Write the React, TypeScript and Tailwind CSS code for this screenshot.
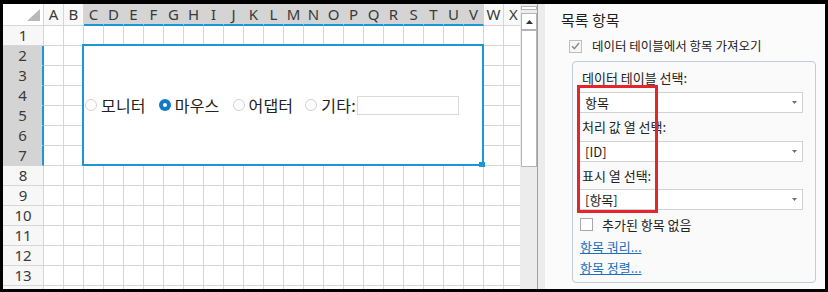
import React from "react";

const COLS = ["A","B","C","D","E","F","G","H","I","J","K","L","M","N","O","P","Q","R","S","T","U","V","W","X"];
const ROWS = [1,2,3,4,5,6,7,8,9,10,11,12,13,14];

function Radio({ checked }: { checked?: boolean }) {
  return checked ? (
    <div className="w-[12px] h-[12px] rounded-full bg-[#1279c8] flex items-center justify-center shrink-0">
      <div className="w-[4px] h-[4px] rounded-full bg-white" />
    </div>
  ) : (
    <div className="w-[12px] h-[12px] rounded-full border border-[#d0d0d0] bg-white shrink-0" />
  );
}

function Combo({ text }: { text: string }) {
  return (
    <div className="w-[224px] h-[21px] border border-[#d2d2d2] bg-white flex items-center justify-between pl-[5px] pr-[5px]">
      <span className="text-[13px] text-[#1e1e1e] leading-none">{text}</span>
      <svg width="5" height="3" viewBox="0 0 5 3"><polygon points="0,0 5,0 2.5,3" fill="#707070" /></svg>
    </div>
  );
}

export default function App() {
  return (
    <div className="w-[828px] h-[292px] bg-black pt-[4px] pl-[3px] pr-[3px] pb-[3px] flex overflow-hidden font-['Noto_Sans_CJK_KR',sans-serif]">
      {/* sheet */}
      <div className="relative w-[517px] h-[285px] overflow-hidden bg-white shrink-0">
        <div className="flex flex-col w-[521px]">
          <div className="flex">
            <div className="relative w-[41px] h-[22px] shrink-0 bg-white border-r border-b border-[#d6d6d6]">
              <svg className="absolute right-[3px] bottom-[4px]" width="13" height="12" viewBox="0 0 13 12">
                <polygon points="13,0 13,12 0,12" fill="#b9b9b9" />
              </svg>
            </div>
            {COLS.map((c, i) => (
              <div
                key={c}
                className={
                  i >= 2 && i <= 21
                    ? "w-[20px] h-[22px] shrink-0 flex items-center justify-center bg-[#d4d4d4] border-r border-r-[#d4d4d4] border-b-2 border-b-[#1c97d4] font-['Noto_Sans',sans-serif] text-[15px] text-[#3a3a3a] leading-none"
                    : "w-[20px] h-[22px] shrink-0 flex items-center justify-center bg-[#f9f9f9] border-r border-b border-[#d6d6d6] font-['Noto_Sans',sans-serif] text-[15px] text-[#3a3a3a] leading-none"
                }
              >
                {c}
              </div>
            ))}
          </div>
          {ROWS.map((r) => (
            <div key={r} className="flex">
              <div
                className={
                  r >= 2 && r <= 7
                    ? "w-[41px] h-[20px] shrink-0 flex items-center justify-center bg-[#d4d4d4] border-r-2 border-r-[#1c97d4] border-b border-b-[#d4d4d4] font-['Noto_Sans',sans-serif] text-[15px] text-[#3a3a3a] leading-none"
                    : "w-[41px] h-[20px] shrink-0 flex items-center justify-center bg-[#f7f7f7] border-r border-b border-[#d6d6d6] font-['Noto_Sans',sans-serif] text-[15px] text-[#3a3a3a] leading-none"
                }
              >
                {r < 14 ? r : ""}
              </div>
              {COLS.map((c) => (
                <div key={c} className="w-[20px] h-[20px] shrink-0 border-r border-b border-[#d6d6d6]" />
              ))}
            </div>
          ))}
        </div>
        {/* form control over the sheet */}
        <div className="absolute left-[79px] top-[40px] w-[402px] h-[122px] border-2 border-[#1c97d4] bg-white flex items-center pl-[1px]">
          <div className="flex items-center">
            <Radio />
            <span className="ml-[4px] text-[16px] tracking-[0.2px] text-[#222] leading-none">모니터</span>
          </div>
          <div className="flex items-center ml-[13px]">
            <Radio checked />
            <span className="ml-[4px] text-[16px] tracking-[0.2px] text-[#222] leading-none">마우스</span>
          </div>
          <div className="flex items-center ml-[13px]">
            <Radio />
            <span className="ml-[4px] text-[16px] tracking-[0.2px] text-[#222] leading-none">어댑터</span>
          </div>
          <div className="flex items-center ml-[12px]">
            <Radio />
            <span className="ml-[4px] text-[16px] tracking-[0.2px] text-[#222] leading-none">기타:</span>
            <div className="ml-[1px] w-[102px] h-[19px] border border-[#dadada] bg-white" />
          </div>
        </div>
        <div className="absolute left-[476px] top-[158px] w-[6px] h-[5px] bg-[#1c97d4]" />
      </div>

      {/* scrollbar */}
      <div className="w-[17px] h-[285px] bg-[#ececec] flex flex-col items-end shrink-0">
        <div className="mt-[2px] w-[16px] h-[4px] border border-[#b4b4b4] bg-white" />
        <div className="mt-[3px] w-[16px] h-[17px] border border-[#b4b4b4] bg-white flex items-center justify-center">
          <svg width="7" height="4" viewBox="0 0 7 4"><polygon points="0,4 7,4 3.5,0" fill="#333" /></svg>
        </div>
        <div className="w-[16px] h-[137px] border border-[#b4b4b4] bg-white" />
      </div>
      <div className="w-[1px] h-[285px] bg-[#a0a0a0] shrink-0" />
      <div className="w-[7px] h-[285px] bg-[#ececec] shrink-0" />

      {/* panel */}
      <div className="relative w-[280px] h-[285px] bg-[#fbfbfb] pl-[16px] pt-[4px] shrink-0">
        <div className="h-[24px] leading-[24px] text-[15px] text-[#1e1e1e]">목록 항목</div>
        <div className="mt-[4px] ml-[8px] h-[20px] flex items-center">
          <div className="w-[13px] h-[13px] border border-[#bdbdbd] bg-[#f6f6f6] flex items-center justify-center shrink-0">
            <svg width="9" height="8" viewBox="0 0 9 8"><path d="M1 4.2 L3.4 6.6 L8 1" fill="none" stroke="#8a8a8a" strokeWidth="1.4" /></svg>
          </div>
          <span className="ml-[10px] text-[12.5px] text-[#222] leading-none">데이터 테이블에서 항목 가져오기</span>
        </div>
        <div className="mt-[5px] ml-[11px] w-[244px] h-[222px] border border-[#c5cad8] rounded-[4px] bg-[#fafafa] pl-[6px] pt-[7px] flex flex-col">
          <div className="ml-[3px] h-[18px] flex items-center text-[13px] text-[#222]">데이터 테이블 선택:</div>
          <div className="mt-[5px]"><Combo text="항목" /></div>
          <div className="mt-[5px] ml-[3px] h-[18px] flex items-center text-[13px] text-[#222]">처리 값 열 선택:</div>
          <div className="mt-[5px]"><Combo text="[ID]" /></div>
          <div className="mt-[5px] ml-[3px] h-[18px] flex items-center text-[13px] text-[#222]">표시 열 선택:</div>
          <div className="mt-[4px]"><Combo text="[항목]" /></div>
          <div className="mt-[4px] ml-[1px] h-[20px] flex items-center">
            <div className="w-[13px] h-[13px] border border-[#a9a9a9] bg-white shrink-0" />
            <span className="ml-[9px] text-[13px] text-[#222] leading-none">추가된 항목 없음</span>
          </div>
          <div className="mt-[4px] ml-[1px] h-[18px] flex items-center text-[13px] text-[#1f6fbd] underline">항목 쿼리...</div>
          <div className="mt-[3px] ml-[1px] h-[18px] flex items-center text-[13px] text-[#1f6fbd] underline">항목 정렬...</div>
        </div>
        <div className="absolute left-[32px] top-[81px] w-[81px] h-[128px] border-[3px] border-[#e3252d]" />
      </div>
    </div>
  );
}
